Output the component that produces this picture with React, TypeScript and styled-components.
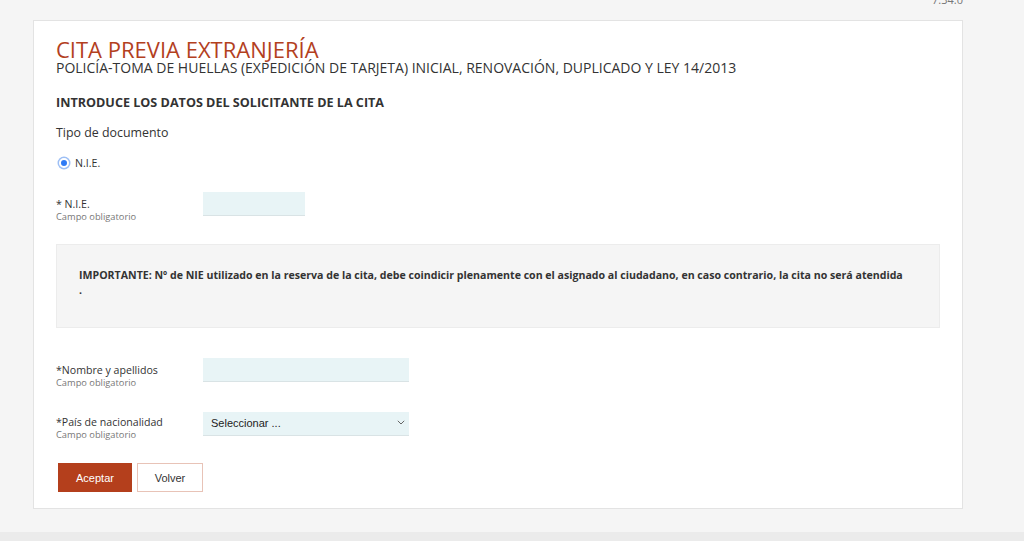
import styled, { createGlobalStyle } from 'styled-components'

const GlobalStyle = createGlobalStyle`
  html, body {
    margin: 0;
    padding: 0;
    background: #f5f5f5;
    font-family: "Open Sans", "DejaVu Sans", sans-serif;
    color: #333;
  }
  * {
    box-sizing: border-box;
  }
`

const Page = styled('div')`
  min-height: 541px;
  display: flex;
  flex-direction: column;
  overflow: hidden;
`

const TopBar = styled('div')`
  height: 20px;
  width: 963px;
  display: flex;
  justify-content: flex-end;
`

const Version = styled('span')`
  font-size: 11px;
  line-height: 12px;
  margin-top: -6px;
  color: #777;
`

const Card = styled('div')`
  margin-left: 33px;
  width: 930px;
  background: #fff;
  border: 1px solid #e3e3e3;
  padding: 18px 22px 16px 22px;
`

const Title = styled('h1')`
  margin: 0;
  font-size: 22px;
  line-height: 21px;
  font-weight: 400;
  color: #b3401e;
`

const Subtitle = styled('h2')`
  margin: 0;
  font-size: 14px;
  line-height: 16px;
  font-weight: 400;
  color: #333;
`

const SectionHeading = styled('h3')`
  margin: 19px 0 0;
  font-size: 12.6px;
  line-height: 16px;
  font-weight: 700;
  color: #333;
`

const FieldsetTitle = styled('div')`
  margin-top: 14px;
  font-size: 12.4px;
  line-height: 16px;
  color: #333;
`

const RadioRow = styled('label')`
  margin-top: 14px;
  height: 16px;
  display: flex;
  align-items: center;
  gap: 6px;
  padding-left: 3px;
  font-size: 10.6px;
  color: #333;
`

const RadioDot = styled('span')`
  width: 10px;
  height: 10px;
  border-radius: 50%;
  background: #2f7bf5;
  border: 2px solid #fff;
  box-shadow: 0 0 0 1.5px #9dbff5;
`

const FormRow = styled('div')<{ $gap: number }>`
  margin-top: ${(p) => p.$gap}px;
  display: flex;
  align-items: flex-start;
`

const LabelColumn = styled('div')`
  width: 147px;
  padding-top: 5px;
  display: flex;
  flex-direction: column;
`

const FieldLabel = styled('span')`
  font-size: 10.6px;
  line-height: 14px;
  color: #333;
`

const Hint = styled('span')`
  font-size: 9.3px;
  line-height: 12px;
  color: #777;
`

const TextInput = styled('input')<{ $width: number }>`
  width: ${(p) => p.$width}px;
  height: 24px;
  margin: 0;
  border: none;
  border-bottom: 1px solid #d9e3e5;
  background: #e8f4f6;
  outline: none;
  padding: 0 8px;
  font-family: "Liberation Sans", Arial, sans-serif;
  font-size: 11px;
`

const SelectWrap = styled('div')`
  position: relative;
  width: 206px;
  height: 24px;
`

const Select = styled('select')`
  appearance: none;
  width: 100%;
  height: 24px;
  margin: 0;
  border: none;
  border-bottom: 1px solid #d9e3e5;
  background: #e8f4f6;
  padding: 0 8px;
  font-family: "Liberation Sans", Arial, sans-serif;
  font-size: 11px;
  color: #222;
  outline: none;
`

const Chevron = styled('svg')`
  position: absolute;
  right: 4px;
  top: 10px;
  pointer-events: none;
`

const Notice = styled('div')`
  margin-top: 21px;
  height: 84px;
  background: #f5f5f5;
  border: 1px solid #ececec;
  padding: 23px 22px 0;
  font-size: 10.6px;
  line-height: 15px;
  font-weight: 700;
  color: #333;
`

const ButtonRow = styled('div')`
  margin-top: 22px;
  display: flex;
  gap: 5px;
  padding-left: 2px;
`

const Button = styled('button')<{ $primary?: boolean }>`
  height: 29px;
  width: ${(p) => (p.$primary ? 74 : 66)}px;
  margin: 0;
  font-family: "Liberation Sans", Arial, sans-serif;
  font-size: 11px;
  cursor: pointer;
  background: ${(p) => (p.$primary ? '#b43f1c' : '#fff')};
  color: ${(p) => (p.$primary ? '#fff' : '#333')};
  border: 1px solid ${(p) => (p.$primary ? '#b43f1c' : '#e8c3b7')};
`

const Footer = styled('div')`
  margin-top: 23px;
  flex: 1;
  background: #ebebeb;
`

const App: React.FC = () => {
  return (
    <Page>
      <GlobalStyle />
      <TopBar>
        <Version>7.34.0</Version>
      </TopBar>
      <Card>
        <Title>CITA PREVIA EXTRANJERÍA</Title>
        <Subtitle>
          POLICÍA-TOMA DE HUELLAS (EXPEDICIÓN DE TARJETA) INICIAL, RENOVACIÓN, DUPLICADO Y LEY 14/2013
        </Subtitle>
        <SectionHeading>INTRODUCE LOS DATOS DEL SOLICITANTE DE LA CITA</SectionHeading>
        <FieldsetTitle>Tipo de documento</FieldsetTitle>
        <RadioRow>
          <RadioDot />
          N.I.E.
        </RadioRow>
        <FormRow $gap={21}>
          <LabelColumn>
            <FieldLabel>* N.I.E.</FieldLabel>
            <Hint>Campo obligatorio</Hint>
          </LabelColumn>
          <TextInput $width={102} />
        </FormRow>
        <Notice>
          IMPORTANTE: Nº de NIE utilizado en la reserva de la cita, debe coindicir plenamente con el asignado al ciudadano, en caso contrario, la cita no será atendida
          <br />.
        </Notice>
        <FormRow $gap={30}>
          <LabelColumn>
            <FieldLabel>*Nombre y apellidos</FieldLabel>
            <Hint>Campo obligatorio</Hint>
          </LabelColumn>
          <TextInput $width={206} />
        </FormRow>
        <FormRow $gap={21}>
          <LabelColumn>
            <FieldLabel>*País de nacionalidad</FieldLabel>
            <Hint>Campo obligatorio</Hint>
          </LabelColumn>
          <SelectWrap>
            <Select defaultValue="">
              <option value="">Seleccionar ...</option>
            </Select>
            <Chevron width="8" height="5" viewBox="0 0 8 5">
              <path d="M0.8 0.8 L4 4 L7.2 0.8" fill="none" stroke="#666" strokeWidth="1" />
            </Chevron>
          </SelectWrap>
        </FormRow>
        <ButtonRow>
          <Button $primary>Aceptar</Button>
          <Button>Volver</Button>
        </ButtonRow>
      </Card>
      <Footer />
    </Page>
  )
}

export default App
